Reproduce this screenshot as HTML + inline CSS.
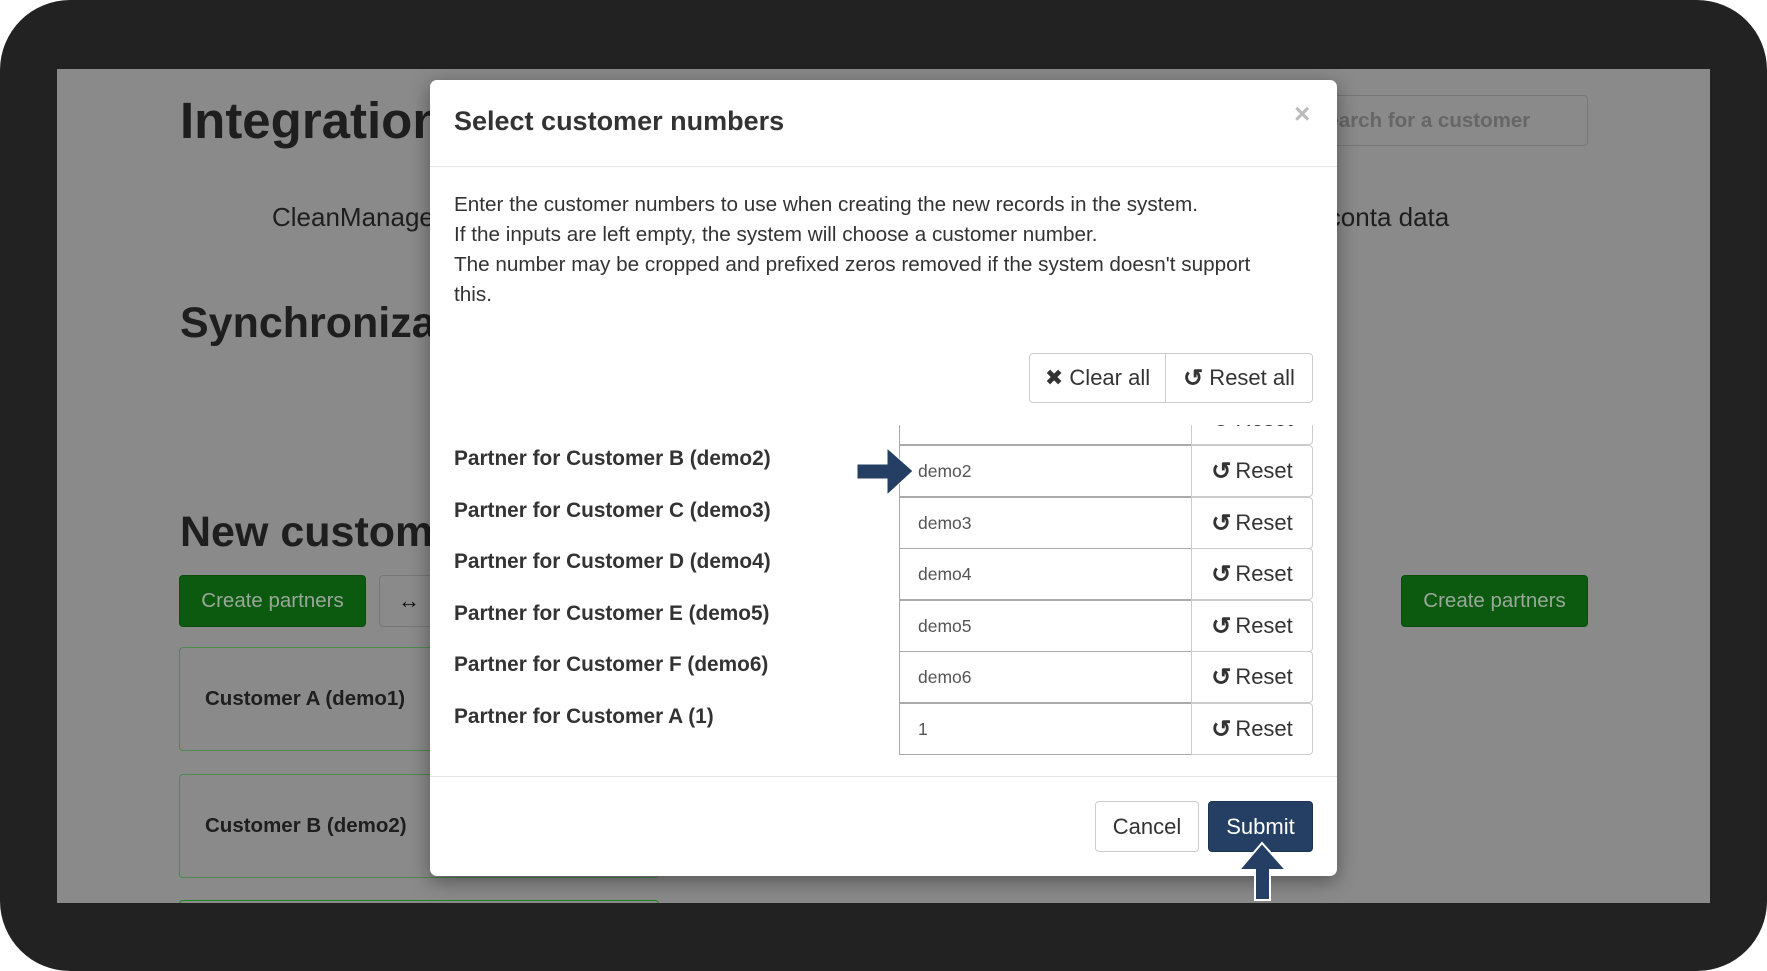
<!DOCTYPE html>
<html><head><meta charset="utf-8"><style>
*{box-sizing:border-box;margin:0;padding:0}
body{width:1767px;height:971px;background:#fff;font-family:"Liberation Sans",Arial,sans-serif;position:relative;overflow:hidden;color:#333}
.frame{position:absolute;left:0;top:0;width:1767px;height:971px;background:#222;border-radius:70px}
.gray{position:absolute;left:57px;top:69px;width:1653px;height:834px;background:#8a8a8a;overflow:hidden}
.a{position:absolute;white-space:nowrap}
.h{font-weight:bold;color:#1e1e1e}
.gbtn{position:absolute;background:#0b5a10;border:1px solid #0a4d0e;border-radius:4px;color:#9aa89a;font-size:20.5px;display:flex;align-items:center;justify-content:center}
.card{position:absolute;border:1px solid #4d8a4d;border-radius:4px;font-weight:bold;font-size:20.5px;color:#1e1e1e;padding-left:25px;display:flex;align-items:center}
.modal{position:absolute;left:430px;top:80px;width:907px;height:796px;background:#fff;border-radius:7px;box-shadow:0 5px 20px rgba(0,0,0,.4)}
.lbl{position:absolute;left:24px;font-weight:bold;font-size:20.8px;color:#333}
.row{position:absolute;left:469px;width:414px;height:52px;display:flex}
.inp{width:292px;height:52px;border:1px solid #aaa;border-right:none;font-size:17.5px;color:#555;padding-left:18px;display:flex;align-items:center}
.rb{width:122px;height:52px;border:1px solid #ccc;border-radius:0 4px 4px 0;font-size:22px;color:#333;display:flex;align-items:center;justify-content:center;gap:4px}
.rb b,.btn b{font-size:24px}
.btn{position:absolute;border:1px solid #ccc;border-radius:4px;font-size:22px;display:flex;align-items:center;justify-content:center}
</style></head><body>
<div class="frame"></div>
<div class="gray">
 <div class="a h" style="left:123px;top:22px;font-size:51px">Integrations</div>
 <div class="a" style="left:215px;top:133px;font-size:26px;color:#1e1e1e">CleanManager</div>
 <div class="a h" style="left:123px;top:230px;font-size:43px">Synchronization</div>
 <div class="a h" style="left:123px;top:439px;font-size:43px">New customers</div>
 <div class="gbtn" style="left:122px;top:506px;width:187px;height:52px">Create partners</div>
 <div class="btn" style="left:322px;top:506px;width:60px;height:52px;border-color:#777;color:#111;font-weight:bold">↔</div>
 <div class="card" style="left:122px;top:578px;width:480px;height:104px">Customer A (demo1)</div>
 <div class="card" style="left:122px;top:705px;width:480px;height:104px">Customer B (demo2)</div>
 <div class="card" style="left:122px;top:831px;width:480px;height:104px;border-color:#1a8a1a"></div>
 <div class="a" style="left:1210px;top:26px;width:321px;height:51px;border:1px solid #777;border-radius:4px;font-size:20.5px;color:#666;font-weight:bold;padding:13px 0 0 48px">search for a customer</div>
 <div class="a" style="left:1226px;top:133px;font-size:26px;color:#1e1e1e">Povconta data</div>
 <div class="gbtn" style="left:1344px;top:506px;width:187px;height:52px">Create partners</div>
</div>
<div class="modal">
 <div class="a" style="left:24px;top:26px;font-size:27px;font-weight:bold;color:#333">Select customer numbers</div>
 <div class="a" style="left:864px;top:18px;font-size:28px;color:#bbb;font-weight:bold">×</div>
 <div style="position:absolute;left:0;top:86px;width:907px;border-top:1px solid #e5e5e5"></div>
 <div class="a" style="left:24px;top:110px;font-size:20.7px;line-height:30px;color:#333">Enter the customer numbers to use when creating the new records in the system.<br>If the inputs are left empty, the system will choose a customer number.<br>The number may be cropped and prefixed zeros removed if the system doesn't support<br>this.</div>
 <div class="btn" style="left:599px;top:273px;width:137px;height:50px;border-radius:4px 0 0 4px">✖&nbsp;Clear all</div>
 <div class="btn" style="left:735px;top:273px;width:148px;height:50px;border-radius:0 4px 4px 0"><b>↺</b>&nbsp;Reset all</div>
 <div style="position:absolute;left:469px;top:345px;width:414px;height:20px;overflow:hidden">
  <div class="row" style="left:0;top:-32px"><div class="inp">demo1</div><div class="rb"><b>↺</b> Reset</div></div>
 </div>
 <div class="lbl" style="top:367px">Partner for Customer B (demo2)</div>
 <div class="lbl" style="top:419px">Partner for Customer C (demo3)</div>
 <div class="lbl" style="top:470px">Partner for Customer D (demo4)</div>
 <div class="lbl" style="top:522px">Partner for Customer E (demo5)</div>
 <div class="lbl" style="top:573px">Partner for Customer F (demo6)</div>
 <div class="lbl" style="top:625px">Partner for Customer A (1)</div>
 <div class="row" style="top:365px"><div class="inp">demo2</div><div class="rb"><b>↺</b> Reset</div></div>
 <div class="row" style="top:417px"><div class="inp">demo3</div><div class="rb"><b>↺</b> Reset</div></div>
 <div class="row" style="top:468px"><div class="inp">demo4</div><div class="rb"><b>↺</b> Reset</div></div>
 <div class="row" style="top:520px"><div class="inp">demo5</div><div class="rb"><b>↺</b> Reset</div></div>
 <div class="row" style="top:571px"><div class="inp">demo6</div><div class="rb"><b>↺</b> Reset</div></div>
 <div class="row" style="top:623px"><div class="inp">1</div><div class="rb"><b>↺</b> Reset</div></div>
 <div style="position:absolute;left:0;top:696px;width:907px;border-top:1px solid #e5e5e5"></div>
 <div class="btn" style="left:665px;top:721px;width:104px;height:51px;color:#333">Cancel</div>
 <div class="btn" style="left:778px;top:721px;width:105px;height:51px;background:#243f63;border-color:#1d3352;color:#fff">Submit</div>
</div>
<svg style="position:absolute;left:855px;top:445px" width="62" height="54"><polygon points="2,19 32,19 32,3 58,26 32,50 32,34 2,34" fill="#243f63" stroke="#fff" stroke-width="1"/></svg>
<svg style="position:absolute;left:1236px;top:840px" width="54" height="62"><polygon points="19,60 19,30 3,30 26,3 50,30 34,30 34,60" fill="#243f63" stroke="#fff" stroke-width="2"/></svg>
</body></html>
